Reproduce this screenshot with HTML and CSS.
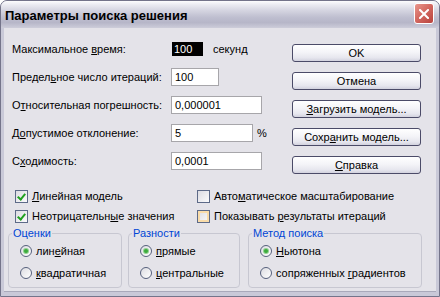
FILE: index.html
```html
<!DOCTYPE html>
<html>
  <head>
    <meta charset="utf-8" />
    <link rel="stylesheet" href="styles.css">
  </head>
  <body>
    <div class="window">
      <div class="titlebar">
        <span class="title">Параметры поиска решения</span>
        <div class="close-btn">
          <svg width="10" height="10" viewBox="0 0 10 10">
            <path d="M1 1 L9 9 M9 1 L1 9" stroke="#fff" stroke-width="2" stroke-linecap="square" />
          </svg>
        </div>
      </div>

      <div class="client">
        <div class="top">
          <div class="fields">
            <div class="field-row">
              <span class="field-label">Максимальное <u>в</u>ремя:</span>
              <span class="edit-sel">100</span>
              <span class="unit">секунд</span>
            </div>
            <div class="field-row">
              <span class="field-label">Предел<u>ь</u>ное число итераций:</span>
              <span class="edit w-short">100</span>
            </div>
            <div class="field-row">
              <span class="field-label">О<u>т</u>носительная погрешность:</span>
              <span class="edit w-long">0,000001</span>
            </div>
            <div class="field-row">
              <span class="field-label">Д<u>о</u>пустимое отклонение:</span>
              <span class="edit w-mid">5</span>
              <span class="percent">%</span>
            </div>
            <div class="field-row">
              <span class="field-label">С<u>х</u>одимость:</span>
              <span class="edit w-long">0,0001</span>
            </div>
          </div>

          <div class="buttons">
            <button class="btn">OK</button>
            <button class="btn">Отмена</button>
            <button class="btn"><u>З</u>агрузить модель...</button>
            <button class="btn">Сохр<u>а</u>нить модель...</button>
            <button class="btn"><u>С</u>правка</button>
          </div>
        </div>

        <div class="checks">
          <div class="check-item"><span class="checkbox checked"></span><span><u>Л</u>инейная модель</span></div>
          <div class="check-item"><span class="checkbox"></span><span>Авто<u>м</u>атическое масштабирование</span></div>
          <div class="check-item"><span class="checkbox checked"></span><span>Неотрицательн<u>ы</u>е значения</span></div>
          <div class="check-item"><span class="checkbox hover"></span><span>Показывать <u>р</u>езультаты итераций</span></div>
        </div>

        <div class="groups">
          <fieldset class="group g-est">
            <legend>Оценки</legend>
            <div class="opts">
              <div class="opt"><span class="radio checked"></span><span>лин<u>е</u>йная</span></div>
              <div class="opt"><span class="radio"></span><span><u>к</u>вадратичная</span></div>
            </div>
          </fieldset>
          <fieldset class="group g-diff">
            <legend>Разности</legend>
            <div class="opts">
              <div class="opt"><span class="radio checked"></span><span><u>п</u>рямые</span></div>
              <div class="opt"><span class="radio"></span><span><u>ц</u>ентральные</span></div>
            </div>
          </fieldset>
          <fieldset class="group g-method">
            <legend>Метод поиска</legend>
            <div class="opts">
              <div class="opt"><span class="radio checked"></span><span><u>Н</u>ьютона</span></div>
              <div class="opt"><span class="radio"></span><span>сопряженных <u>г</u>радиентов</span></div>
            </div>
          </fieldset>
        </div>
      </div>
    </div>
  </body>
</html>
```

FILE: styles.css
```css
body {
  margin: 0;
  font-family: "Liberation Sans", Arial, sans-serif;
  font-size: 11px;
  color: #000;
  background: #fff;
}

.window {
  width: 440px;
  height: 297px;
  box-sizing: border-box;
  border: 1px solid #74748a;
  border-radius: 7px 7px 0 0;
  background: #c9c9d8;
  display: flex;
  flex-direction: column;
  overflow: hidden;
}

/* Title bar */
.titlebar {
  flex: none;
  height: 27px;
  display: flex;
  align-items: center;
  justify-content: space-between;
  padding: 0 5px 0 4px;
  background: linear-gradient(to bottom, #fdfdfe 0%, #ededf3 12%, #d5d5e1 35%, #bfbfd0 60%, #b6b6c8 80%, #cdcdda 100%);
}

.title {
  font-size: 13px;
  font-weight: bold;
  color: #000;
  padding-top: 1px;
}

.close-btn {
  width: 20px;
  height: 21px;
  box-sizing: border-box;
  border: 1px solid #fff;
  border-radius: 3px;
  background: linear-gradient(135deg, #e8968c 0%, #d46a62 45%, #b8423c 100%);
  display: flex;
  align-items: center;
  justify-content: center;
  margin-top: -2px;
}

/* Client area */
.client {
  flex: 1;
  margin: 0 3px 4px 3px;
  padding: 7px 0 0 8px;
  background: #e4e3e9;
  border-bottom: 1px solid #a9a9ba;
}

.top {
  display: flex;
}

.fields {
  width: 280px;
  flex: none;
}

.field-row {
  height: 28px;
  display: flex;
  align-items: center;
}

.field-label {
  width: 159px;
  flex: none;
}

.edit {
  height: 18px;
  box-sizing: border-box;
  border: 1px solid #a7a6aa;
  background: #fff;
  padding: 0 3px;
  display: flex;
  align-items: center;
}

.w-short { width: 48px; }
.w-mid { width: 82px; }
.w-long { width: 91px; }

.edit-sel {
  width: 31px;
  height: 14px;
  margin-left: 1px;
  padding-left: 2px;
  box-sizing: border-box;
  background: #000;
  color: #fff;
  display: flex;
  align-items: center;
}

.unit {
  margin-left: 10px;
}

.percent {
  margin-left: 4px;
}

.buttons {
  padding-top: 9px;
  display: flex;
  flex-direction: column;
  gap: 10px;
}

.btn {
  width: 129px;
  height: 18px;
  padding: 0;
  border: 1px solid #4b4b68;
  border-radius: 3px;
  background: linear-gradient(to bottom, #ffffff 0%, #f4f4f8 45%, #e6e6ee 80%, #d2d2de 100%);
  font-family: inherit;
  font-size: 11px;
  color: #000;
}

/* Checkboxes */
.checks {
  margin: 11px 0 0 3px;
  display: grid;
  grid-template-columns: 182px auto;
  grid-auto-rows: 20px;
}

.check-item {
  display: flex;
  align-items: center;
  gap: 4px;
}

.checkbox {
  width: 13px;
  height: 13px;
  box-sizing: border-box;
  border: 1px solid #5d6a88;
  background: linear-gradient(135deg, #dcdce2 0%, #fbfbfc 100%);
  position: relative;
}

.checkbox.hover {
  box-shadow: inset 0 0 0 2px #f9dcaa;
}

.checkbox.checked::after {
  content: "";
  position: absolute;
  left: 3px;
  top: 1px;
  width: 3px;
  height: 6px;
  border: solid #21a121;
  border-width: 0 2px 2px 0;
  transform: rotate(40deg);
}

/* Group boxes */
.groups {
  display: flex;
  margin: 1px 0 0 -4px;
}

.group {
  margin: 0;
  padding: 0;
  min-width: 0;
  box-sizing: border-box;
  border: 1px solid #c7c7d1;
  border-radius: 4px;
}

.group legend {
  margin-left: 3px;
  padding: 0 1px;
  line-height: 13px;
  color: #0046d5;
}

.g-est { width: 114px; }
.g-diff { width: 112px; margin-left: 6px; }
.g-method { width: 174px; margin-left: 8px; }

.opts {
  padding: 0 0 3px 11px;
}

.opt {
  height: 22px;
  display: flex;
  align-items: center;
  gap: 4px;
}

.radio {
  width: 12px;
  height: 12px;
  box-sizing: border-box;
  border: 1px solid #56607c;
  border-radius: 50%;
  background: linear-gradient(135deg, #dcdce2 0%, #ffffff 100%);
  display: flex;
  align-items: center;
  justify-content: center;
}

.radio.checked::after {
  content: "";
  width: 4px;
  height: 4px;
  border-radius: 50%;
  background: #3cab3c;
  box-shadow: 0 0 0 1px #8fd08f;
}
```
